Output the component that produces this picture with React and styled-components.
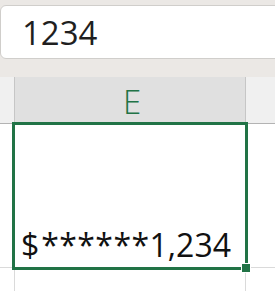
import React from 'react'
import styled, { createGlobalStyle } from 'styled-components'

const GlobalStyle = createGlobalStyle`
  html, body {
    margin: 0;
    padding: 0;
    background: #ffffff;
    overflow: hidden;
  }
  body {
    font-family: "Open Sans", "Noto Sans", sans-serif;
  }
`

const Page = styled.div`
  width: 275px;
  height: 291px;
  display: flex;
  flex-direction: column;
  overflow: hidden;
`

const Ribbon = styled.div`
  background: #ebe8e5;
  padding: 5px 0 18px 0;
`

const FormulaBar = styled.div`
  height: 52px;
  margin-right: -20px;
  background: #ffffff;
  border: 1px solid #d0cecb;
  border-radius: 6px;
  display: flex;
  align-items: center;
  padding-left: 21px;
  font-size: 33px;
  color: #1f1f1f;
  line-height: 1;
`

const Sheet = styled.div`
  flex: 1;
  display: grid;
  grid-template-columns: 15px 231px 1fr;
  grid-template-rows: 47px 144px 1fr;
  background: #ffffff;
`

const HeaderCell = styled.div`
  background: ${p => (p.$active ? '#e0e0e0' : '#f0f0f0')};
  border-bottom: 1px solid #b3b3b3;
  border-right: ${p => (p.$edge ? '1px solid #c6c6c6' : 'none')};
  display: flex;
  align-items: center;
  justify-content: center;
  color: #217346;
  font-size: 33px;
  font-weight: 300;
  line-height: 1;
  padding-top: 2px;
  padding-left: ${p => (p.$active ? '4px' : '0')};
`

const GridCell = styled.div`
  position: relative;
  border-right: ${p => (p.$edge ? '1px solid #dadada' : 'none')};
  border-bottom: ${p => (p.$row ? '1px solid #dadada' : 'none')};
`

const Selection = styled.div`
  position: absolute;
  left: -3px;
  top: -2px;
  right: -3px;
  bottom: -3px;
  border: 3px solid #217346;
  z-index: 2;
`

const Handle = styled.div`
  position: absolute;
  right: -6px;
  bottom: -6px;
  width: 8px;
  height: 8px;
  background: #217346;
  border: 1px solid #ffffff;
`

const Value = styled.div`
  position: absolute;
  left: 6px;
  right: 14px;
  bottom: 6px;
  display: flex;
  align-items: baseline;
  font-size: 32px;
  line-height: 1;
  color: #111111;
`

const Fill = styled.span`
  flex: 1;
  letter-spacing: 0.4px;
  padding-left: 2px;
`

export default function App() {
  return (
    <Page>
      <GlobalStyle />
      <Ribbon>
        <FormulaBar>1234</FormulaBar>
      </Ribbon>
      <Sheet>
        <HeaderCell $edge />
        <HeaderCell $active $edge>E</HeaderCell>
        <HeaderCell />

        <GridCell $edge $row />
        <GridCell $edge $row>
          <Selection>
            <Handle />
          </Selection>
          <Value>
            <span>$</span>
            <Fill>******</Fill>
            <span>1,234</span>
          </Value>
        </GridCell>
        <GridCell $row />

        <GridCell $edge />
        <GridCell $edge />
        <GridCell />
      </Sheet>
    </Page>
  )
}
